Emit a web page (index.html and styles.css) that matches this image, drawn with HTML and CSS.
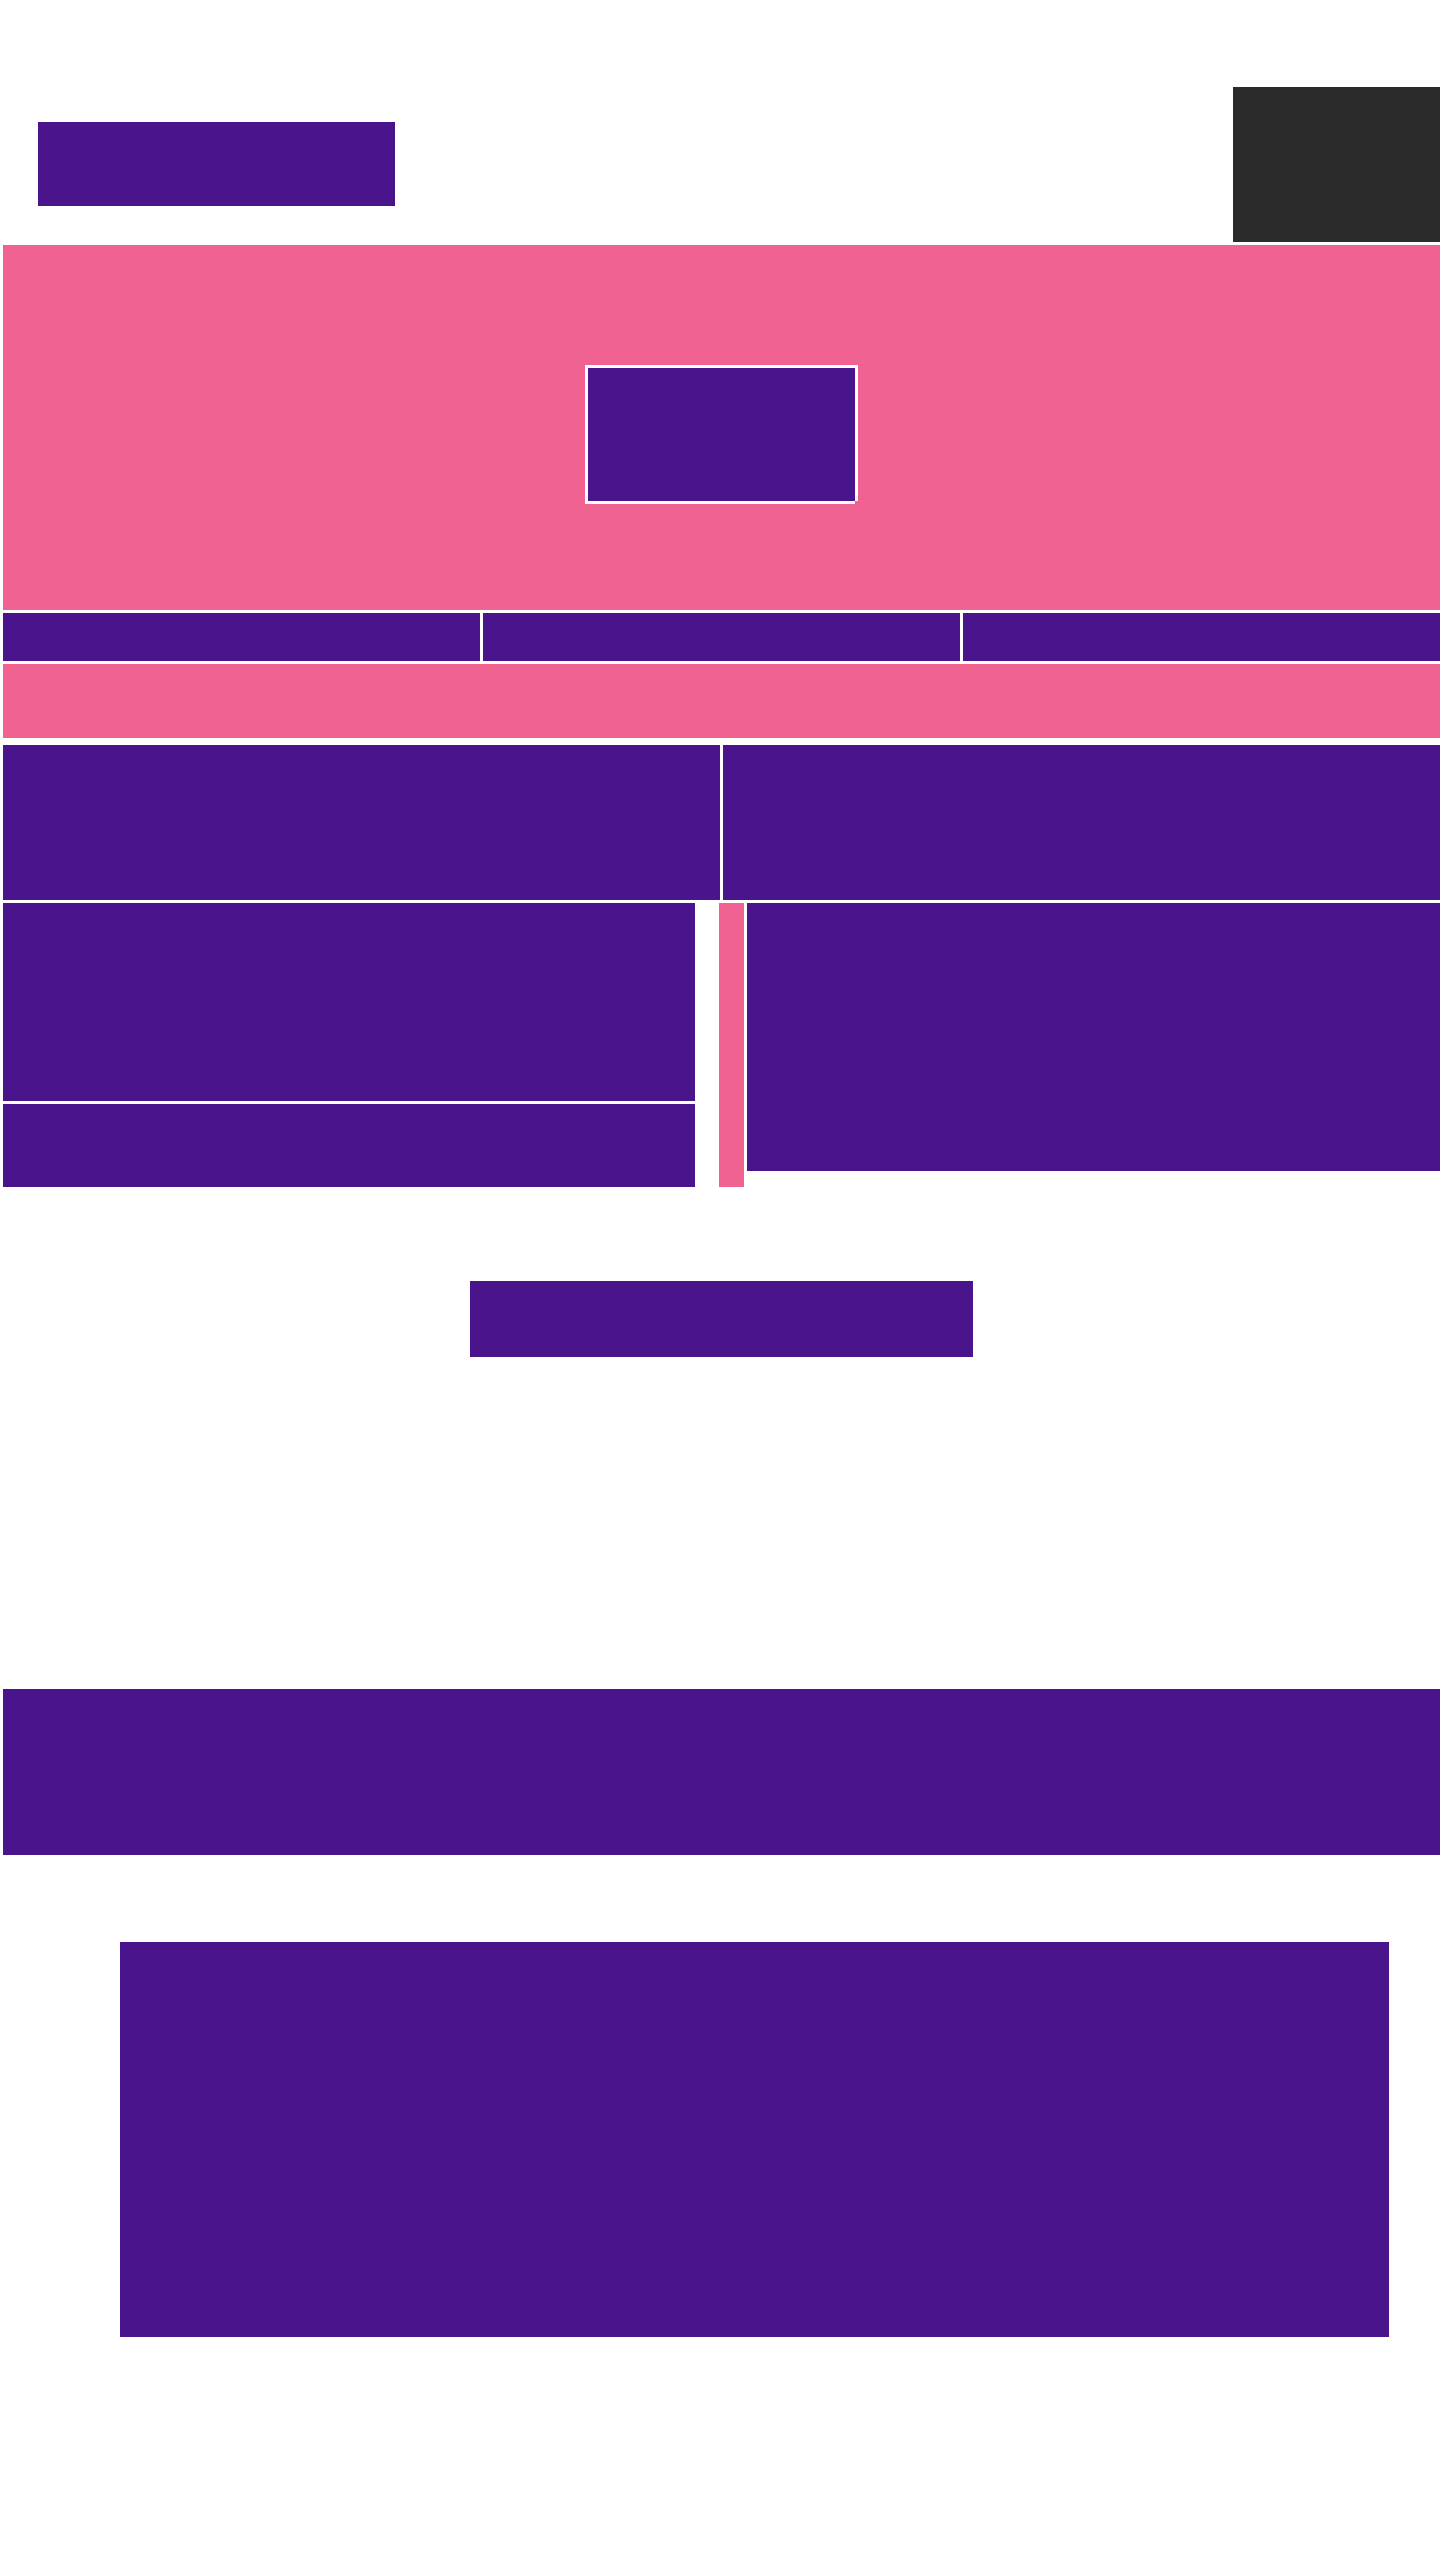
FILE: index.html
```html
<!DOCTYPE html>
<html lang="en">
<head>
<meta charset="utf-8">
<title>Page</title>
<link rel="stylesheet" href="styles.css">
</head>
<body>
<div class="page">
  <header class="header">
    <div class="logo"></div>
    <div class="account"></div>
  </header>
  <section class="hero">
    <div class="hero-card"></div>
  </section>
  <nav class="tabs">
    <div class="tab"></div>
    <div class="tab"></div>
    <div class="tab"></div>
  </nav>
  <div class="notice"></div>
  <section class="grid">
    <div class="row-top">
      <div class="tile"></div>
      <div class="tile"></div>
    </div>
    <div class="row-main">
      <div class="col-left">
        <div class="panel-tall"></div>
        <div class="panel-short"></div>
      </div>
      <div class="divider"></div>
      <div class="panel-right"></div>
    </div>
  </section>
  <div class="cta-wrap">
    <div class="cta"></div>
  </div>
  <section class="banner"></section>
  <section class="feature">
    <div class="feature-box"></div>
  </section>
</div>
</body>
</html>
```

FILE: styles.css
```css
html, body {
  margin: 0;
  padding: 0;
  background: #ffffff;
  font-family: "Liberation Sans", Arial, sans-serif;
}

.page {
  width: 1440px;
  min-height: 2560px;
  padding-left: 3px;
  box-sizing: border-box;
  display: flex;
  flex-direction: column;
}

.header {
  display: flex;
  justify-content: space-between;
  align-items: flex-start;
  padding-top: 87px;
  height: 155px;
}

.logo {
  width: 357px;
  height: 84px;
  margin-top: 35px;
  margin-left: 35px;
  background: #4a148c;
}

.account {
  width: 207px;
  height: 155px;
  background: #2b2b2b;
}

.hero {
  margin-top: 3px;
  height: 365px;
  background: #f06292;
  display: flex;
  flex-direction: column;
  align-items: center;
  padding-top: 123px;
  box-sizing: border-box;
}

.hero-card {
  width: 267px;
  height: 133px;
  background: #4a148c;
  box-shadow:
    -3px -3px 0 #ffffff,
    3px -3px 0 #ffffff,
    3px 0 0 #ffffff,
    -3px 3px 0 #ffffff,
    0 3px 0 #ffffff;
}

.tabs {
  margin-top: 3px;
  display: flex;
  gap: 3px;
  height: 48px;
}

.tab {
  flex: 1;
  background: #4a148c;
}

.notice {
  margin-top: 3px;
  height: 74px;
  background: #f06292;
}

.grid {
  margin-top: 7px;
  display: flex;
  flex-direction: column;
  gap: 3px;
}

.row-top {
  display: flex;
  gap: 3px;
  height: 155px;
}

.tile {
  flex: 1;
  background: #4a148c;
}

.row-main {
  display: flex;
  align-items: flex-start;
}

.col-left {
  width: 692px;
  display: flex;
  flex-direction: column;
  gap: 3px;
}

.panel-tall {
  height: 198px;
  background: #4a148c;
}

.panel-short {
  height: 83px;
  background: #4a148c;
}

.divider {
  width: 25px;
  height: 284px;
  margin-left: 24px;
  background: #f06292;
}

.panel-right {
  flex: 1;
  margin-left: 3px;
  height: 268px;
  background: #4a148c;
}

.cta-wrap {
  display: flex;
  justify-content: center;
  margin-top: 94px;
}

.cta {
  width: 503px;
  height: 76px;
  background: #4a148c;
}

.banner {
  margin-top: 332px;
  height: 166px;
  background: #4a148c;
}

.feature {
  margin-top: 87px;
  padding-left: 117px;
}

.feature-box {
  width: 1269px;
  height: 395px;
  background: #4a148c;
}
```
